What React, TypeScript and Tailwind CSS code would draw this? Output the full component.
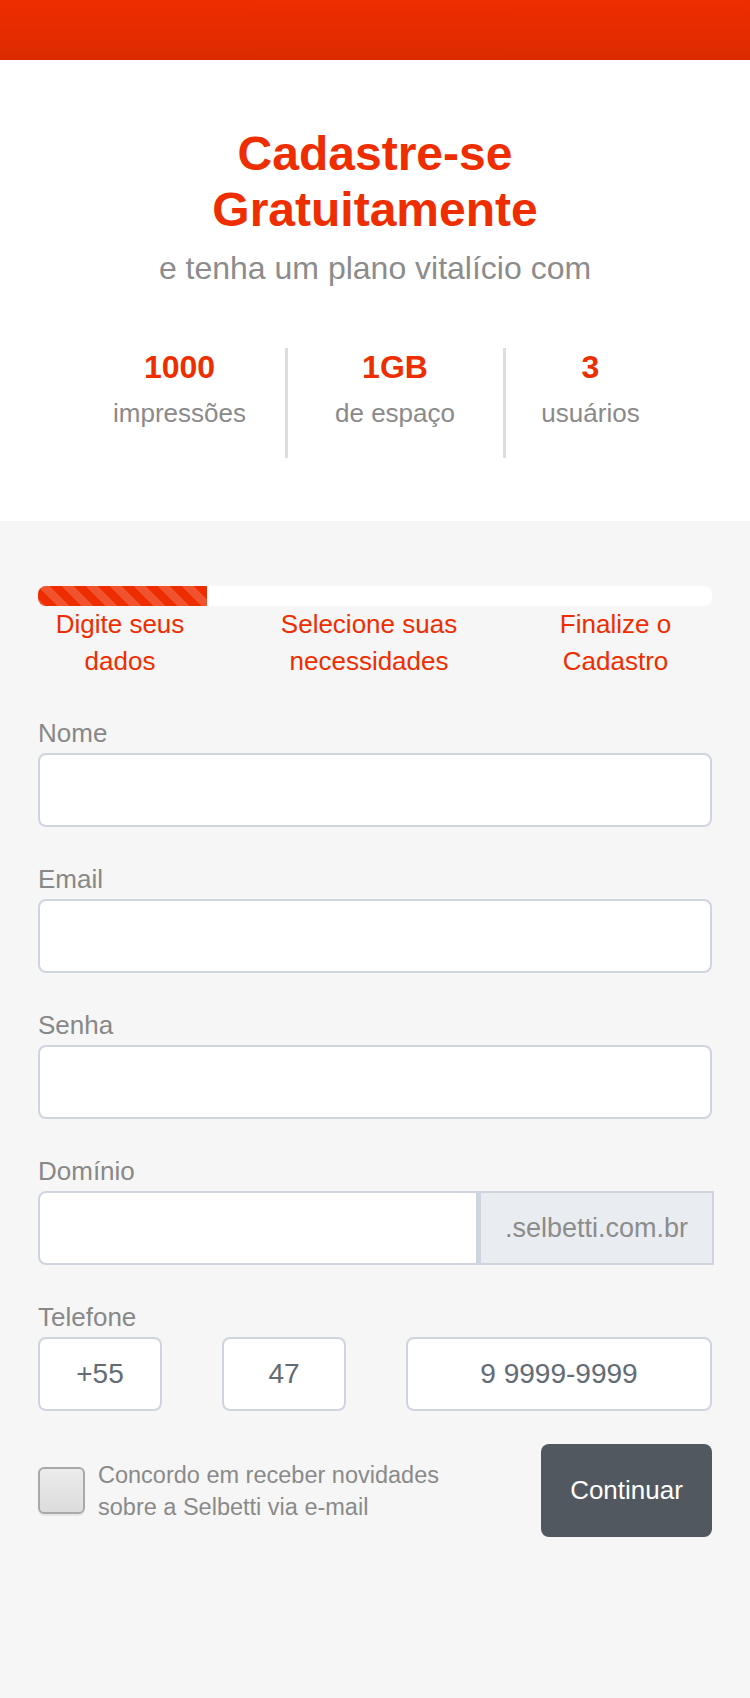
import { useState } from 'react'

const steps = [
  { label: 'Digite seus dados', col: 'w-[164px]' },
  { label: 'Selecione suas necessidades', col: 'w-[334px]' },
  { label: 'Finalize o Cadastro', col: 'w-[159px]' },
]

function Field({ label, children }: { label: string; children: React.ReactNode }) {
  return (
    <div className="mb-[37px]">
      <label className="mb-[5px] block text-[26px] leading-[30px] text-[#888888]">{label}</label>
      {children}
    </div>
  )
}

const boxClass =
  'block h-[74px] min-w-0 rounded-[8px] border-2 border-[#cfd5de] bg-white px-4 text-[28px] text-[#636b75] outline-none'
const inputClass = `${boxClass} w-full`

export default function App() {
  const [agree, setAgree] = useState(false)

  return (
    <div className="min-h-[1698px] bg-[#f6f6f6] font-['Liberation_Sans',Arial,sans-serif]">
      {/* top bar */}
      <div className="h-[60px] bg-gradient-to-b from-[#ee2d00] to-[#dc2b00]" />

      {/* hero */}
      <div className="bg-white pt-[66px] pb-[63px] text-center">
        <h1 className="text-[48px] font-bold leading-[56px] text-[#ee2d00]">
          Cadastre-se
          <br />
          Gratuitamente
        </h1>
        <p className="mt-[11px] text-[32px] leading-[38px] text-[#8c8c8c]">e tenha um plano vitalício com</p>

        <div className="mt-[61px] flex justify-center">
          <div className="h-[110px] w-[210px]">
            <div className="text-[32px] font-bold leading-[38px] text-[#ee2d00]">1000</div>
            <div className="mt-[11px] text-[26px] leading-[32px] text-[#8a8a8a]">impressões</div>
          </div>
          <div className="h-[110px] w-[221px] border-x-[3px] border-[#dddddd]">
            <div className="text-[32px] font-bold leading-[38px] text-[#ee2d00]">1GB</div>
            <div className="mt-[11px] text-[26px] leading-[32px] text-[#8a8a8a]">de espaço</div>
          </div>
          <div className="h-[110px] w-[170px]">
            <div className="text-[32px] font-bold leading-[38px] text-[#ee2d00]">3</div>
            <div className="mt-[11px] text-[26px] leading-[32px] text-[#8a8a8a]">usuários</div>
          </div>
        </div>
      </div>

      {/* form */}
      <div className="px-[38px] pt-[65px]">
        <div className="h-[20px] overflow-hidden rounded-[8px] bg-white">
          <div className="h-full w-1/4 bg-[#ee2d00] bg-[linear-gradient(45deg,rgba(255,255,255,0.18)_25%,transparent_25%,transparent_50%,rgba(255,255,255,0.18)_50%,rgba(255,255,255,0.18)_75%,transparent_75%,transparent)] bg-[size:24px_24px]" />
        </div>
        <div className="flex">
          {steps.map((s) => (
            <div key={s.label} className={`${s.col} px-4 text-center text-[26px] leading-[37px] text-[#ee2d00]`}>
              {s.label}
            </div>
          ))}
        </div>

        <div className="mt-[38px]">
          <Field label="Nome">
            <input className={inputClass} />
          </Field>
          <Field label="Email">
            <input className={inputClass} />
          </Field>
          <Field label="Senha">
            <input type="password" className={inputClass} />
          </Field>
          <Field label="Domínio">
            <div className="flex h-[74px]">
              <input className="block h-full min-w-0 flex-1 rounded-l-[8px] border-2 border-[#cfd5de] bg-white px-4 text-[28px] outline-none" />
              <span className="-mr-[2px] flex h-full items-center border-2 border-l-[3px] border-[#cfd5de] bg-[#e9ecf1] px-[24px] text-[27px] text-[#8c8c8c]">
                .selbetti.com.br
              </span>
            </div>
          </Field>
          <div>
            <label className="mb-[5px] block text-[26px] leading-[30px] text-[#888888]">Telefone</label>
            <div className="flex gap-[60px]">
              <input defaultValue="+55" size={1} className={`${boxClass} w-[124px] text-center`} />
              <input defaultValue="47" size={1} className={`${boxClass} w-[124px] text-center`} />
              <input defaultValue="9 9999-9999" size={1} className={`${boxClass} flex-1 text-center`} />
            </div>
          </div>
        </div>

        <div className="mt-[33px] flex items-center justify-between">
          <label className="flex items-center gap-[13px]">
            <span
              onClick={() => setAgree(!agree)}
              className="block h-[47px] w-[47px] shrink-0 rounded-[6px] border-2 border-[#a9a9a9] bg-gradient-to-b from-[#ececec] to-[#dcdcdc] shadow-[0_2px_0_rgba(0,0,0,0.06)]"
            />
            <span className="w-[360px] text-[23.5px] leading-[32px] text-[#8a8a8a]">
              Concordo em receber novidades sobre a Selbetti via e-mail
            </span>
          </label>
          <button className="h-[93px] w-[171px] rounded-[8px] bg-[#525860] text-[26px] font-medium text-white">
            Continuar
          </button>
        </div>
      </div>
    </div>
  )
}
